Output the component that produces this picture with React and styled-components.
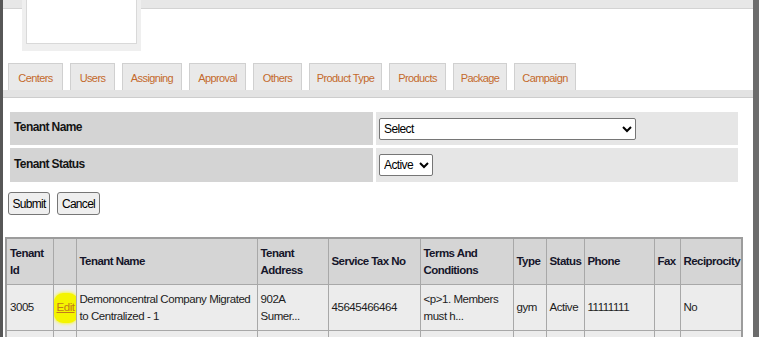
import React from "react";
import styled, { createGlobalStyle } from "styled-components";

const GlobalStyle = createGlobalStyle`
  body {
    margin: 0;
    background: #ffffff;
    font-family: "Liberation Sans", Arial, sans-serif;
  }
`;

const tabs = [
  { label: "Centers", width: 55 },
  { label: "Users", width: 45 },
  { label: "Assigning", width: 60 },
  { label: "Approval", width: 57 },
  { label: "Others", width: 49 },
  { label: "Product Type", width: 73 },
  { label: "Products", width: 57 },
  { label: "Package", width: 54 },
  { label: "Campaign", width: 62 },
];

const columns = [47, 23, 181, 71, 92, 93, 33, 38, 70, 26, 62];

const App = () => {
  return (
    <>
      <GlobalStyle />
      <Frame>
        <Header>
          <LogoBox>
            <div className="inner" />
          </LogoBox>
        </Header>

        <TabBar>
          {tabs.map((t) => (
            <Tab key={t.label} width={t.width}>
              {t.label}
            </Tab>
          ))}
        </TabBar>

        <Content>
          <FilterGrid>
            <Label>Tenant Name</Label>
            <Value>
              <Select width={257}>
                <option>Select</option>
              </Select>
            </Value>
            <Label>Tenant Status</Label>
            <Value>
              <Select width={54}>
                <option>Active</option>
              </Select>
            </Value>
          </FilterGrid>

          <Buttons>
            <Button width={42}>Submit</Button>
            <Button width={43}>Cancel</Button>
          </Buttons>

          <Results>
            <colgroup>
              {columns.map((w, i) => (
                <col key={i} style={{ width: w }} />
              ))}
            </colgroup>
            <thead>
              <tr>
                <th>
                  Tenant
                  <br />
                  Id
                </th>
                <th></th>
                <th>Tenant Name</th>
                <th>
                  Tenant
                  <br />
                  Address
                </th>
                <th>Service Tax No</th>
                <th>
                  Terms And
                  <br />
                  Conditions
                </th>
                <th>Type</th>
                <th>Status</th>
                <th>Phone</th>
                <th>Fax</th>
                <th>Reciprocity</th>
              </tr>
            </thead>
            <tbody>
              <tr>
                <td>3005</td>
                <td className="edit">
                  <EditLink>Edit</EditLink>
                </td>
                <td>
                  Demononcentral Company Migrated
                  <br />
                  to Centralized - 1
                </td>
                <td>
                  902A
                  <br />
                  Sumer...
                </td>
                <td>45645466464</td>
                <td>
                  &lt;p&gt;1. Members
                  <br />
                  must h...
                </td>
                <td>gym</td>
                <td>Active</td>
                <td>11111111</td>
                <td></td>
                <td>No</td>
              </tr>
              <tr>
                {columns.map((_, i) => (
                  <td key={i}>&nbsp;</td>
                ))}
              </tr>
            </tbody>
          </Results>
        </Content>
      </Frame>
    </>
  );
};

const Frame = styled.div`
  height: 337px;
  overflow: hidden;
  border-left: 3px solid #575757;
  border-right: 6px solid #6c6c6c;
  box-sizing: border-box;
  background: #ffffff;
`;

const Header = styled.div`
  display: flex;
  padding-left: 19px;
  background: linear-gradient(
    #e7e7e7 0,
    #e7e7e7 8px,
    #d3d3d3 8px,
    #d3d3d3 9px,
    #ffffff 9px
  );
`;

const LogoBox = styled.div`
  width: 119px;
  height: 51px;
  box-sizing: border-box;
  padding: 0 4px 7px 4px;
  background: #efefef;
  .inner {
    height: 100%;
    background: #ffffff;
    border: 1px solid #d9d9d9;
    border-top: none;
    box-sizing: border-box;
  }
`;

const TabBar = styled.div`
  display: flex;
  align-items: flex-end;
  gap: 7px;
  margin-top: 12px;
  padding-left: 5px;
  border-bottom: 7px solid #e3e3e3;
  box-shadow: 0 1px 0 #cdcdcd;
`;

const Tab = styled.div`
  width: ${(p) => p.width}px;
  height: 27px;
  box-sizing: border-box;
  display: flex;
  align-items: center;
  justify-content: center;
  padding-top: 2px;
  background: #e9e9e9;
  border: 1px solid #d0d0d0;
  border-bottom: none;
  color: #c4692c;
  font-size: 11px;
  letter-spacing: -0.6px;
`;

const Content = styled.div`
  padding: 15px 0 0 2px;
`;

const FilterGrid = styled.div`
  display: grid;
  grid-template-columns: 363px 362px;
  grid-template-rows: 33px 34px;
  gap: 3px;
  margin-left: 5px;
`;

const Label = styled.div`
  background: #d4d4d4;
  display: flex;
  align-items: center;
  padding: 0 0 3px 4px;
  font-weight: 700;
  font-size: 12px;
  letter-spacing: -0.6px;
  color: #141414;
`;

const Value = styled.div`
  background: #e6e6e6;
  display: flex;
  align-items: center;
  padding-left: 3px;
`;

const Select = styled.select`
  width: ${(p) => p.width}px;
  height: 22px;
  font-family: "Liberation Sans", Arial, sans-serif;
  font-size: 12px;
  letter-spacing: -0.6px;
  color: #000;
  background: #ffffff;
  border: 1px solid #767676;
  border-radius: 2px;
  padding: 0;
`;

const Buttons = styled.div`
  display: flex;
  gap: 7px;
  margin: 10px 0 0 3px;
`;

const Button = styled.button`
  width: ${(p) => p.width}px;
  height: 23px;
  padding: 0;
  font-family: "Liberation Sans", Arial, sans-serif;
  font-size: 12px;
  letter-spacing: -0.7px;
  color: #000;
  background: #efefef;
  border: 1px solid #767676;
  border-radius: 3px;
`;

const Results = styled.table`
  margin-top: 22px;
  width: 736px;
  table-layout: fixed;
  border-collapse: collapse;
  border: 2px solid #9c9c9c;
  font-size: 11.5px;
  letter-spacing: -0.45px;
  line-height: 17px;

  th,
  td {
    border: 1px solid #a8a8a8;
    padding: 0 3px;
    height: 45px;
    text-align: left;
    vertical-align: middle;
    overflow: hidden;
    white-space: nowrap;
  }
  th {
    background: #d5d5d5;
    color: #15152a;
    font-weight: 700;
    font-size: 11.5px;
    letter-spacing: -0.55px;
  }
  td {
    background: #ececec;
    color: #1c1c1c;
  }
  td.edit {
    padding: 0;
    text-align: center;
  }
`;

const EditLink = styled.span`
  display: inline-block;
  padding: 6px 3px 7px;
  background: #f4f400;
  border-radius: 9px;
  box-shadow: 0 0 3px 1px #f6f64a;
  color: #c27a1c;
  text-decoration: underline;
  line-height: 17px;
`;

export default App;
